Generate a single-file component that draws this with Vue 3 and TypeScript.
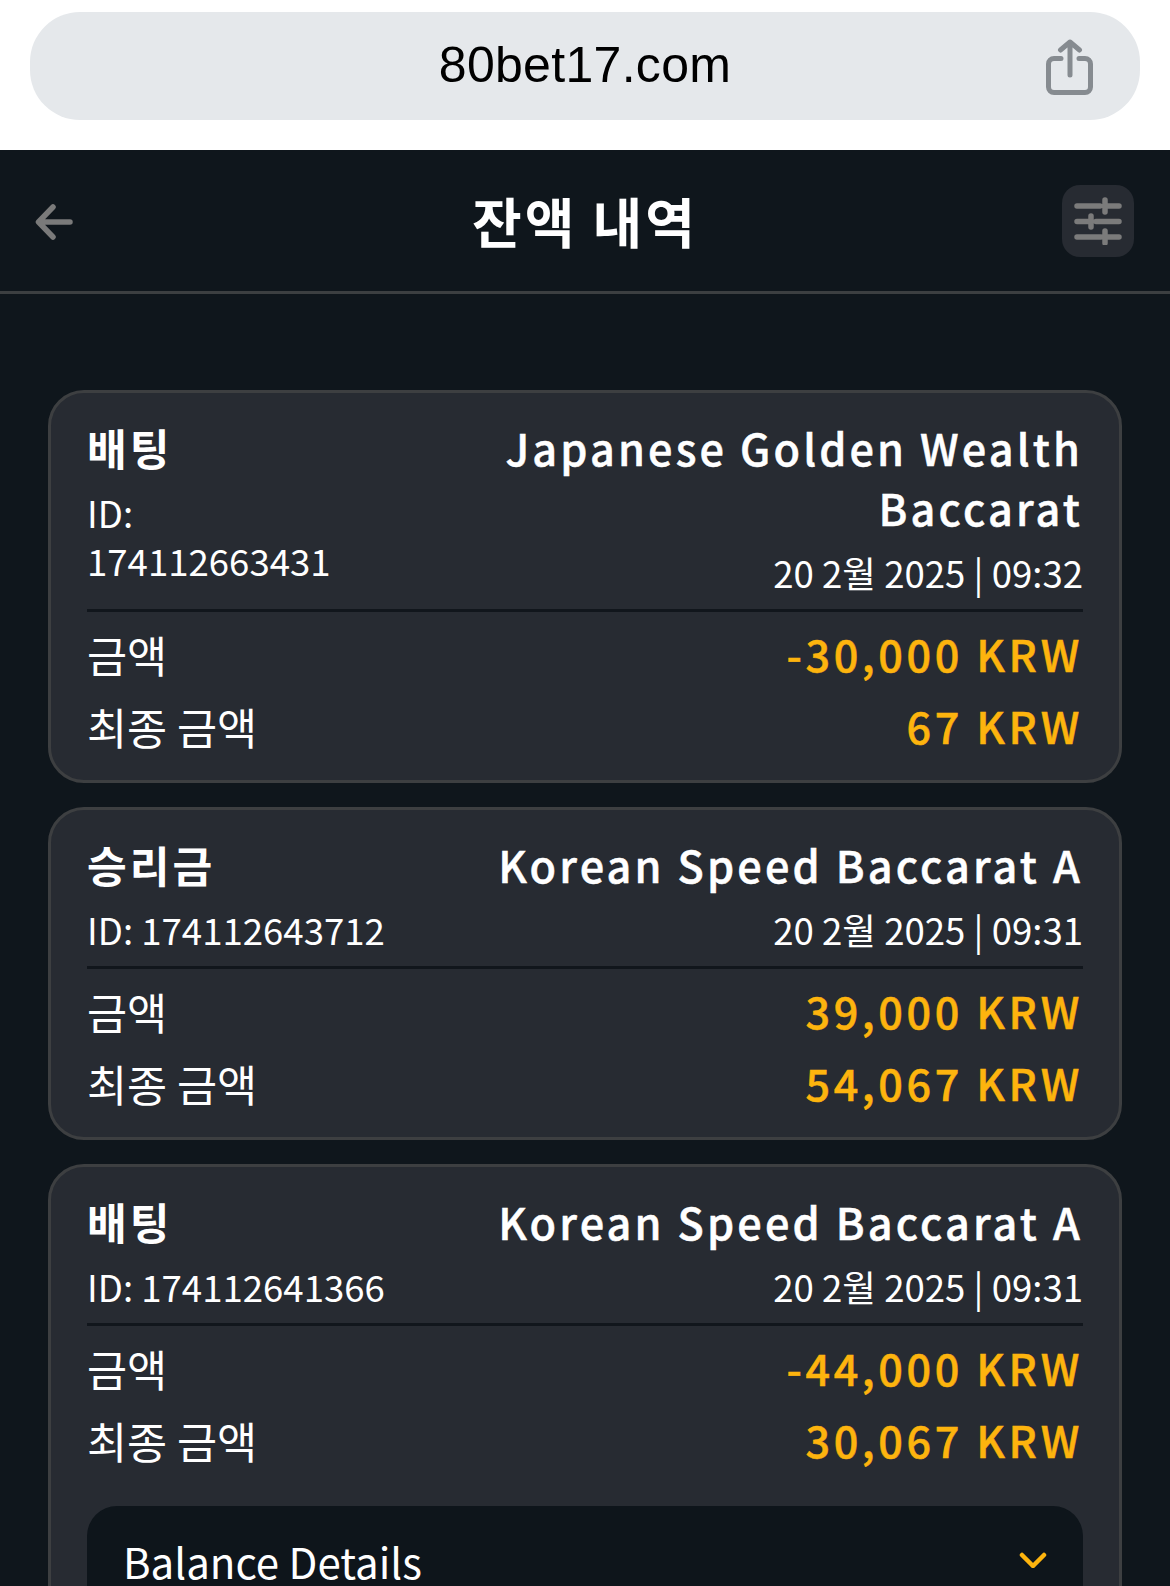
<template>
  <div class="page">
    <div class="browser-bar">
      <div class="url-pill">
        <span class="url-text">80bet17.com</span>
        <svg class="share-icon" viewBox="0 0 47 56" fill="none" stroke="#868b90" stroke-width="5" stroke-linecap="round" stroke-linejoin="round">
          <path d="M15 19.500H8a5.500 5.500 0 0 0-5.500 5.500v23A5.500 5.500 0 0 0 8 53.500h31a5.500 5.500 0 0 0 5.500-5.500V25a5.500 5.500 0 0 0-5.500-5.500h-6" />
          <path d="M24 36V3M14.500 11L24 3l9.500 8" />
        </svg>
      </div>
    </div>

    <div class="screen">
      <header class="top-bar">
        <svg class="back-icon" viewBox="0 0 38 36" fill="none" stroke="#7a7a7a" stroke-width="5.500" stroke-linecap="round" stroke-linejoin="round">
          <path d="M35 18H4M18 3L3.500 18 18 33" />
        </svg>
        <h1 class="top-title">잔액 내역</h1>
        <button class="filter-button" type="button">
          <svg viewBox="0 0 48 48" fill="none" stroke="#7b7b7b" stroke-width="5.500" stroke-linecap="round">
            <path d="M3 9h23M31 3v12M31 9h14" />
            <path d="M3 24.500h14M17 19v11M22 24.500h23" />
            <path d="M3 40h24M31 34v12M31 40h14" />
          </svg>
        </button>
      </header>

      <main class="list">
        <section v-for="item in items" :key="item.id" class="card">
          <div class="card-head">
            <div class="head-left">
              <div class="kind">{{ item.kind }}</div>
              <div class="meta">ID: {{ item.id }}</div>
            </div>
            <div class="head-right">
              <div class="game">{{ item.game }}</div>
              <div class="meta">{{ item.date }}</div>
            </div>
          </div>
          <div class="row">
            <span class="row-label">금액</span>
            <span class="row-value">{{ item.amount }} KRW</span>
          </div>
          <div class="row">
            <span class="row-label">최종 금액</span>
            <span class="row-value">{{ item.total }} KRW</span>
          </div>
          <div v-if="item.details" class="details">
            <span class="details-label">Balance Details</span>
            <svg class="chevron" viewBox="0 0 28 16" fill="none" stroke="#fdb40e" stroke-width="4.500" stroke-linecap="round" stroke-linejoin="round">
              <path d="M3 3l11 11L25 3" />
            </svg>
          </div>
        </section>
      </main>
    </div>
  </div>
</template>

<script setup lang="ts">
interface BalanceItem {
  id: string
  kind: string
  game: string
  date: string
  amount: string
  total: string
  details?: boolean
}

const items: BalanceItem[] = [
  {
    id: '174112663431',
    kind: '배팅',
    game: 'Japanese Golden Wealth Baccarat',
    date: '20 2월 2025 | 09:32',
    amount: '-30,000',
    total: '67',
  },
  {
    id: '174112643712',
    kind: '승리금',
    game: 'Korean Speed Baccarat A',
    date: '20 2월 2025 | 09:31',
    amount: '39,000',
    total: '54,067',
  },
  {
    id: '174112641366',
    kind: '배팅',
    game: 'Korean Speed Baccarat A',
    date: '20 2월 2025 | 09:31',
    amount: '-44,000',
    total: '30,067',
    details: true,
  },
]
</script>

<style scoped>
.page {
  height: 1586px;
  overflow: hidden;
  background: #ffffff;
  font-family: "Noto Sans CJK KR", "Noto Sans", sans-serif;
}

.browser-bar {
  height: 150px;
  padding: 12px 30px 0;
  box-sizing: border-box;
}

.url-pill {
  position: relative;
  height: 108px;
  padding-bottom: 2px;
  box-sizing: border-box;
  border-radius: 50px;
  background: #e5e8eb;
  display: flex;
  align-items: center;
  justify-content: center;
}

.url-text {
  font-family: "Liberation Sans", Arial, sans-serif;
  font-size: 50px;
  letter-spacing: 0.3px;
  color: #000000;
}

.share-icon {
  position: absolute;
  right: 47px;
  top: 27px;
  width: 47px;
  height: 56px;
}

.screen {
  height: 1436px;
  background: #0f161c;
}

.top-bar {
  height: 144px;
  box-sizing: border-box;
  border-bottom: 3px solid #3c3f41;
  padding: 0 36px;
  display: grid;
  grid-template-columns: 1fr auto 1fr;
  align-items: center;
}

.back-icon {
  width: 38px;
  height: 36px;
  margin: 2px 0 0 -1px;
}

.top-title {
  margin: 0;
  font-size: 54px;
  font-weight: 700;
  color: #ffffff;
  letter-spacing: 3px;
}

.filter-button {
  justify-self: end;
  width: 72px;
  height: 72px;
  border: none;
  border-radius: 18px;
  background: #272b32;
  padding: 12px;
  display: flex;
  align-items: center;
  justify-content: center;
}

.filter-button svg {
  width: 48px;
  height: 48px;
}

.list {
  padding: 96px 48px 0;
  display: flex;
  flex-direction: column;
  gap: 24px;
}

.card {
  background: #272b32;
  border: 3px solid #3d3f41;
  border-radius: 36px;
  padding: 24px 36px 25px;
  color: #ffffff;
}

.card-head {
  display: flex;
  justify-content: space-between;
  border-bottom: 3px solid #11161c;
  padding-bottom: 12px;
  margin-bottom: 11px;
}

.head-right {
  text-align: right;
}

.kind,
.game {
  font-size: 43.2px;
  line-height: 60px;
  letter-spacing: 3px;
  margin-bottom: 12px;
}

.kind {
  font-weight: 700;
}

.game {
  font-weight: 500;
  letter-spacing: 3.15px;
  -webkit-text-stroke: 0.5px currentColor;
}

.meta {
  font-size: 36.6px;
  line-height: 48px;
  font-weight: 400;
}

.row {
  display: flex;
  justify-content: space-between;
  align-items: center;
  height: 60px;
  margin-bottom: 12px;
}

.row:last-child {
  margin-bottom: 0;
}

.row-label {
  font-size: 43.6px;
  font-weight: 400;
  padding-top: 2px;
}

.row-value {
  font-size: 43.2px;
  font-weight: 500;
  letter-spacing: 3.6px;
  -webkit-text-stroke: 0.5px currentColor;
  color: #fdb40e;
}

.details {
  margin-top: 37px;
  height: 110px;
  box-sizing: border-box;
  padding: 0 36px 2px;
  border-radius: 30px;
  background: #0e151b;
  display: flex;
  align-items: center;
  justify-content: space-between;
}

.details-label {
  font-size: 42px;
  font-weight: 400;
}

.chevron {
  width: 28px;
  height: 16px;
}
</style>

<style>
html,
body {
  margin: 0;
  background: #0f161c;
}
</style>
